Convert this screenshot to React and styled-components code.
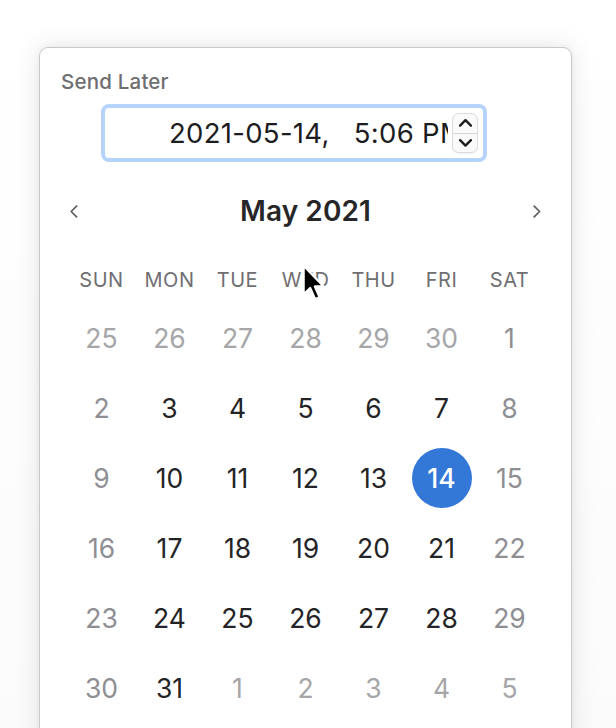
import React from "react";
import styled, { createGlobalStyle } from "styled-components";

const Global = createGlobalStyle`
  html, body { margin: 0; padding: 0; background: #ffffff; overflow: hidden; }
  body { font-family: Inter, "Noto Sans", "Liberation Sans", sans-serif; -webkit-font-smoothing: antialiased; }
`;

const Page = styled.div`
  position: relative;
  width: 616px;
  height: 728px;
  padding: 47px 0 0 39px;
  box-sizing: border-box;
  background: linear-gradient(#ffffff, #fbfbfb);
`;

const Panel = styled.div`
  width: 533px;
  height: 720px;
  box-sizing: border-box;
  background: #ffffff;
  border: 1px solid #c9c9c9;
  border-radius: 9px;
  box-shadow: 0 0 26px rgba(0, 0, 0, 0.1), 0 0 6px rgba(0, 0, 0, 0.05);
  padding: 21px 0 0 0;
  display: flex;
  flex-direction: column;
`;

const Label = styled.div`
  margin-left: 21px;
  font-size: 20.5px;
  line-height: 26px;
  font-weight: 500;
  color: #6e6e70;
  letter-spacing: 0.2px;
`;

const InputRing = styled.div`
  margin: 9px 0 0 61px;
  width: 386px;
  height: 58px;
  box-sizing: border-box;
  border: 4px solid #b6d4fb;
  border-radius: 8px;
  background: #ffffff;
  display: flex;
  align-items: center;
  padding: 0 5px 0 64px;
`;

const DateText = styled.div`
  flex: 1;
  margin-right: 4px;
  overflow: hidden;
  white-space: pre;
  font-size: 27.5px;
  line-height: 34px;
  color: #1d1d1f;
  letter-spacing: 0.3px;
`;

const Stepper = styled.div`
  width: 26px;
  height: 40px;
  border: 1px solid #dcdcdc;
  border-radius: 7px;
  box-sizing: border-box;
  display: flex;
  flex-direction: column;
  background: #fafafa;
  box-shadow: 0 1px 1px rgba(0, 0, 0, 0.06);
`;

const StepHalf = styled.div`
  flex: 1;
  display: flex;
  align-items: center;
  justify-content: center;
  border-top: ${(p) => (p.$divider ? "1px solid #d6d6d6" : "none")};
`;

const Header = styled.div`
  margin-top: 29px;
  height: 40px;
  display: flex;
  align-items: center;
  justify-content: space-between;
  padding: 0 28px 0 28px;
`;

const NavButton = styled.div`
  width: 12px;
  display: flex;
  align-items: center;
  justify-content: center;
`;

const Title = styled.div`
  font-size: 28px;
  font-weight: 600;
  color: #262628;
  letter-spacing: 0.1px;
`;

const Grid = styled.div`
  align-self: center;
  width: 476px;
  display: grid;
  grid-template-columns: repeat(7, 68px);
`;

const WeekRow = styled(Grid)`
  margin-top: 34px;
`;

const DayGrid = styled(Grid)`
  margin-top: 8px;
  grid-auto-rows: 70px;
`;

const WeekDay = styled.div`
  height: 30px;
  display: flex;
  align-items: center;
  justify-content: center;
  font-size: 20px;
  color: #6f6f72;
  letter-spacing: 0.5px;
`;

const colors = {
  other: "#a6a6a8",
  weekend: "#8e8e93",
  normal: "#242426",
  selected: "#ffffff",
};

const Day = styled.div`
  display: flex;
  align-items: center;
  justify-content: center;
`;

const DayNum = styled.div`
  width: 60px;
  height: 60px;
  border-radius: 50%;
  display: flex;
  align-items: center;
  justify-content: center;
  font-size: 26.5px;
  color: ${(p) => colors[p.$kind]};
  background: ${(p) => (p.$kind === "selected" ? "#3478d7" : "transparent")};
  font-weight: ${(p) => (p.$kind === "selected" ? 500 : 400)};
`;

const Cursor = styled.svg`
  position: absolute;
  left: 301px;
  top: 264px;
  width: 26px;
  height: 38px;
  overflow: visible;
`;

const Chevron = ({ dir, size = 12, color = "#5f5f62", width = 1.6 }) => {
  const paths = {
    left: "M7 1 L2 6 L7 11",
    right: "M2 1 L7 6 L2 11",
    up: "M1 7 L6 2 L11 7",
    down: "M1 2 L6 7 L11 2",
  };
  const vb = dir === "left" || dir === "right" ? "0 0 9 12" : "0 0 12 9";
  const w = dir === "left" || dir === "right" ? size * 0.75 : size;
  const h = dir === "left" || dir === "right" ? size : size * 0.75;
  return (
    <svg width={w} height={h} viewBox={vb} fill="none">
      <path d={paths[dir]} stroke={color} strokeWidth={width} strokeLinecap="round" strokeLinejoin="round" />
    </svg>
  );
};

const weekdays = ["SUN", "MON", "TUE", "WED", "THU", "FRI", "SAT"];

const o = (n) => [n, "other"];
const w = (n) => [n, "weekend"];
const d = (n) => [n, "normal"];

const days = [
  o(25), o(26), o(27), o(28), o(29), o(30), w(1),
  w(2), d(3), d(4), d(5), d(6), d(7), w(8),
  w(9), d(10), d(11), d(12), d(13), [14, "selected"], w(15),
  w(16), d(17), d(18), d(19), d(20), d(21), w(22),
  w(23), d(24), d(25), d(26), d(27), d(28), w(29),
  w(30), d(31), o(1), o(2), o(3), o(4), o(5),
];

export default function App() {
  return (
    <>
      <Global />
      <Page>
        <Panel>
          <Label>Send Later</Label>
          <InputRing>
            <DateText>{"2021-05-14,   5:06 PM"}</DateText>
            <Stepper>
              <StepHalf>
                <Chevron dir="up" size={13} color="#1d1d1f" width={2.2} />
              </StepHalf>
              <StepHalf $divider>
                <Chevron dir="down" size={13} color="#1d1d1f" width={2.2} />
              </StepHalf>
            </Stepper>
          </InputRing>
          <Header>
            <NavButton>
              <Chevron dir="left" size={13} />
            </NavButton>
            <Title>May 2021</Title>
            <NavButton>
              <Chevron dir="right" size={13} />
            </NavButton>
          </Header>
          <WeekRow>
            {weekdays.map((wd) => (
              <WeekDay key={wd}>{wd}</WeekDay>
            ))}
          </WeekRow>
          <DayGrid>
            {days.map(([n, kind], i) => (
              <Day key={i}>
                <DayNum $kind={kind}>{n}</DayNum>
              </Day>
            ))}
          </DayGrid>
        </Panel>
        <Cursor viewBox="0 0 14 22">
          <path
            d="M1 1 L1 17.5 L4.8 13.9 L7.6 20.3 L10.2 19.2 L7.5 13 L12.6 13 Z"
            fill="#000000"
            stroke="#ffffff"
            strokeWidth="1.3"
            strokeLinejoin="round"
          />
        </Cursor>
      </Page>
    </>
  );
}
